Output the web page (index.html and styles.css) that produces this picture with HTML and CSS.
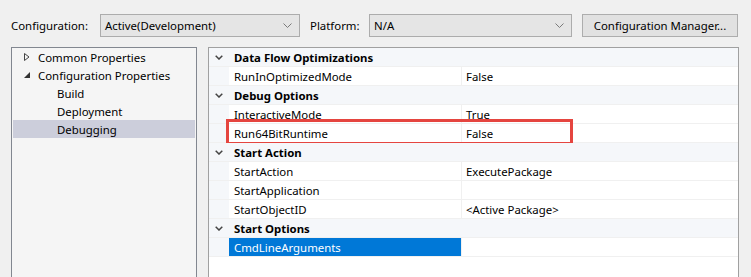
FILE: index.html
```html
<!DOCTYPE html>
<html lang="en">

<head>
    <meta charset="UTF-8">
    <title>Property Pages - Debugging</title>
    <link rel="stylesheet" href="styles.css">
</head>

<body>
    <div class="toolbar">
        <span class="label">Configuration:</span>
        <div class="combo combo-config">
            <span>Active(Development)</span>
            <svg class="combo-arrow" width="9" height="5" viewBox="0 0 9 5"><path d="M0.5 0.5 L4.5 4.5 L8.5 0.5" fill="none" stroke="#7a7a7a" stroke-width="1"/></svg>
        </div>
        <span class="label label-platform">Platform:</span>
        <div class="combo combo-platform">
            <span>N/A</span>
            <svg class="combo-arrow" width="9" height="5" viewBox="0 0 9 5"><path d="M0.5 0.5 L4.5 4.5 L8.5 0.5" fill="none" stroke="#7a7a7a" stroke-width="1"/></svg>
        </div>
        <button class="btn">Configuration Manager...</button>
    </div>

    <div class="main">
        <div class="tree">
            <div class="tree-item">
                <svg class="twisty" width="6" height="8" viewBox="0 0 6 8"><path d="M0.5 0.5 L5 4 L0.5 7.5 Z" fill="none" stroke="#444" stroke-width="1"/></svg>
                <span>Common Properties</span>
            </div>
            <div class="tree-item">
                <svg class="twisty" width="6" height="8" viewBox="0 0 6 8"><path d="M6 1 L6 7 L0 7 Z" fill="#333"/></svg>
                <span>Configuration Properties</span>
            </div>
            <div class="tree-item child">Build</div>
            <div class="tree-item child">Deployment</div>
            <div class="tree-item child selected">Debugging</div>
        </div>

        <div class="grid">
            <div class="row category">
                <div class="gutter"><svg width="8" height="5" viewBox="0 0 8 5"><path d="M0.7 0.7 L4 4 L7.3 0.7" fill="none" stroke="#444" stroke-width="1.5"/></svg></div>
                <div class="cat-name">Data Flow Optimizations</div>
            </div>
            <div class="row">
                <div class="gutter"></div>
                <div class="name">RunInOptimizedMode</div>
                <div class="value">False</div>
            </div>
            <div class="row category">
                <div class="gutter"><svg width="8" height="5" viewBox="0 0 8 5"><path d="M0.7 0.7 L4 4 L7.3 0.7" fill="none" stroke="#444" stroke-width="1.5"/></svg></div>
                <div class="cat-name">Debug Options</div>
            </div>
            <div class="row">
                <div class="gutter"></div>
                <div class="name">InteractiveMode</div>
                <div class="value">True</div>
            </div>
            <div class="row marked">
                <div class="gutter"></div>
                <div class="name">Run64BitRuntime</div>
                <div class="value">False</div>
                <div class="mark-box"></div>
            </div>
            <div class="row category">
                <div class="gutter"><svg width="8" height="5" viewBox="0 0 8 5"><path d="M0.7 0.7 L4 4 L7.3 0.7" fill="none" stroke="#444" stroke-width="1.5"/></svg></div>
                <div class="cat-name">Start Action</div>
            </div>
            <div class="row">
                <div class="gutter"></div>
                <div class="name">StartAction</div>
                <div class="value">ExecutePackage</div>
            </div>
            <div class="row">
                <div class="gutter"></div>
                <div class="name">StartApplication</div>
                <div class="value"></div>
            </div>
            <div class="row">
                <div class="gutter"></div>
                <div class="name">StartObjectID</div>
                <div class="value">&lt;Active Package&gt;</div>
            </div>
            <div class="row category">
                <div class="gutter"><svg width="8" height="5" viewBox="0 0 8 5"><path d="M0.7 0.7 L4 4 L7.3 0.7" fill="none" stroke="#444" stroke-width="1.5"/></svg></div>
                <div class="cat-name">Start Options</div>
            </div>
            <div class="row">
                <div class="gutter"></div>
                <div class="name active">CmdLineArguments</div>
                <div class="value"></div>
            </div>
        </div>
    </div>
</body>

</html>
```

FILE: styles.css
```css
html {
    overflow: hidden;
}

body {
    margin: 0;
    background-color: #f0f0f0;
    font-family: "Noto Sans", "Open Sans", sans-serif;
    font-size: 11.4px;
    color: #000;
}

.toolbar {
    display: flex;
    align-items: center;
    padding: 14px 0 0 11px;
    height: 23px;
}

.label {
    width: 89px;
}

.label-platform {
    width: 59px;
    margin-left: 10px;
}

.combo {
    display: flex;
    align-items: center;
    justify-content: space-between;
    box-sizing: border-box;
    height: 23px;
    padding: 0 7px 0 4px;
    background-color: #e5e5e5;
    border: 1px solid #acacac;
}

.combo-config {
    width: 200px;
}

.combo-platform {
    width: 203px;
}

.btn {
    box-sizing: border-box;
    height: 23px;
    width: 156px;
    margin-left: 10px;
    padding: 0;
    font-family: inherit;
    font-size: 11.4px;
    color: #000;
    background-color: #e1e1e1;
    border: 1px solid #adadad;
}

.main {
    display: flex;
    gap: 11px;
    padding: 10px 0 0 11px;
}

.tree {
    box-sizing: border-box;
    width: 186px;
    height: 230px;
    background-color: #f5f5f5;
    border: 1px solid #828790;
    border-bottom: none;
}

.tree-item {
    display: flex;
    align-items: center;
    height: 18px;
    padding-left: 25px;
    margin: 0 1px;
}

.twisty {
    margin-left: -14px;
    margin-right: 8px;
}

.tree-item.child {
    padding-left: 44px;
}

.tree-item.selected {
    background-color: #cccedb;
}

.grid {
    position: relative;
    box-sizing: border-box;
    width: 531px;
    height: 230px;
    background-color: #fff;
    border: 1px solid #a0a0a0;
    border-bottom: none;
}

.row {
    position: relative;
    display: flex;
    height: 18px;
    border-bottom: 1px solid #f0f0f0;
}

.gutter {
    display: flex;
    align-items: center;
    justify-content: center;
    width: 20px;
    background-color: #f5f7fa;
}

.category {
    background-color: #f5f7fa;
}

.cat-name {
    display: flex;
    align-items: center;
    padding-left: 5px;
    font-weight: bold;
}

.name {
    display: flex;
    align-items: center;
    box-sizing: border-box;
    width: 233px;
    padding-left: 5px;
    border-right: 1px solid #f0f0f0;
}

.name.active {
    background-color: #0078d7;
    color: #fff;
}

.value {
    display: flex;
    align-items: center;
    padding-left: 4px;
}

.mark-box {
    position: absolute;
    left: 17px;
    top: -5px;
    width: 341px;
    height: 20px;
    border: 3px solid #e5453f;
}
```
